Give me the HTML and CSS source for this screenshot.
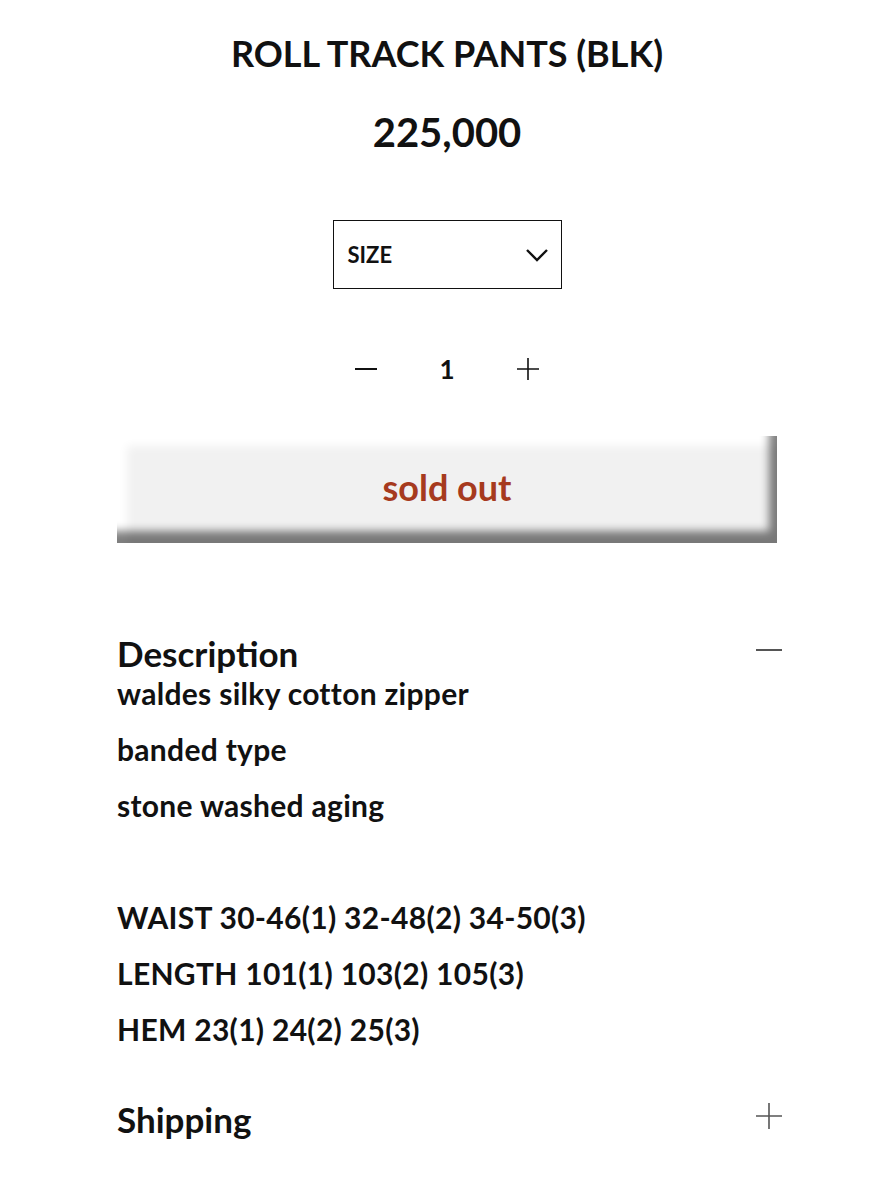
FILE: index.html
```html
<!DOCTYPE html>
<html>
<head>
  <title>ROLL TRACK PANTS (BLK)</title>
  <link rel="stylesheet" href="styles.css">
</head>
<body>
  <div class="product">
    <h1 class="product-title">ROLL TRACK PANTS (BLK)</h1>
    <div class="product-price">225,000</div>

    <div class="option-row">
      <div class="size-select">
        <span>SIZE</span>
        <svg width="24" height="14" viewBox="0 0 24 14"><path d="M2 2 L12 12 L22 2" fill="none" stroke="#111" stroke-width="2.4"/></svg>
      </div>
    </div>

    <div class="quantity">
      <button class="qty-btn" aria-label="minus">
        <svg width="22" height="22" viewBox="0 0 22 22"><path d="M0 11 H22" stroke="#111" stroke-width="2"/></svg>
      </button>
      <span class="qty-value">1</span>
      <button class="qty-btn" aria-label="plus">
        <svg width="22" height="22" viewBox="0 0 22 22"><path d="M0 11 H22 M11 0 V22" stroke="#111" stroke-width="1.6"/></svg>
      </button>
    </div>

    <div class="sold-out">sold out</div>

    <div class="accordion">
      <div class="accordion-head">
        <h2>Description</h2>
        <svg class="toggle" width="26" height="26" viewBox="0 0 26 26"><path d="M0 13 H26" stroke="#555" stroke-width="2"/></svg>
      </div>
      <div class="accordion-body">
        <p>waldes silky cotton zipper</p>
        <p>banded type</p>
        <p>stone washed aging</p>
        <p class="blank">&nbsp;</p>
        <p>WAIST 30-46(1) 32-48(2) 34-50(3)</p>
        <p>LENGTH 101(1) 103(2) 105(3)</p>
        <p>HEM 23(1) 24(2) 25(3)</p>
      </div>
    </div>

    <div class="accordion">
      <div class="accordion-head">
        <h2>Shipping</h2>
        <svg class="toggle" width="26" height="26" viewBox="0 0 26 26"><path d="M0 13 H26 M13 0 V26" stroke="#555" stroke-width="1.6"/></svg>
      </div>
    </div>
  </div>
</body>
</html>
```

FILE: styles.css
```css
body {
  margin: 0;
  font-family: Lato, "Open Sans", sans-serif;
  font-weight: 700;
  color: #111;
  background-color: #fff;
}

.product {
  width: 660px;
  margin: 0 auto;
  padding-top: 28px;
}

.product-title {
  margin: 0;
  text-align: center;
  font-size: 36px;
  line-height: 50px;
  font-weight: 700;
}

.product-price {
  margin-top: 29px;
  text-align: center;
  font-size: 40px;
  line-height: 50px;
}

.option-row {
  display: flex;
  justify-content: center;
  margin-top: 63px;
}

.size-select {
  width: 229px;
  height: 69px;
  box-sizing: border-box;
  border: 1.5px solid #111;
  display: flex;
  align-items: center;
  justify-content: space-between;
  padding: 0 12px 0 14px;
  font-size: 22px;
}

.quantity {
  display: flex;
  justify-content: center;
  align-items: center;
  gap: 62px;
  margin-top: 68px;
  height: 24px;
}

.qty-btn {
  background: none;
  border: none;
  padding: 0;
  width: 22px;
  height: 22px;
  cursor: pointer;
}

.qty-value {
  font-size: 26px;
}

.sold-out {
  margin-top: 55px;
  height: 107px;
  background-color: #f1f1f1;
  display: flex;
  align-items: center;
  justify-content: center;
  color: #a63a1e;
  font-size: 36px;
  padding-bottom: 6px;
  box-sizing: border-box;
  box-shadow: inset -12px -16px 8px -4px rgba(0, 0, 0, 0.5),
              inset 10px 10px 10px #fff;
}

.accordion {
  margin-top: 90px;
}

.accordion-head {
  display: flex;
  justify-content: space-between;
  align-items: flex-start;
}

.accordion-head h2 {
  margin: 0;
  font-size: 35px;
  line-height: 40px;
  font-weight: 700;
}

.toggle {
  margin-top: 4px;
  margin-right: -5px;
}

.accordion-body {
  margin-top: -8px;
}

.accordion-body p {
  margin: 0;
  font-size: 30px;
  line-height: 56px;
  letter-spacing: 0.3px;
}

.accordion + .accordion {
  margin-top: 42px;
}
```
